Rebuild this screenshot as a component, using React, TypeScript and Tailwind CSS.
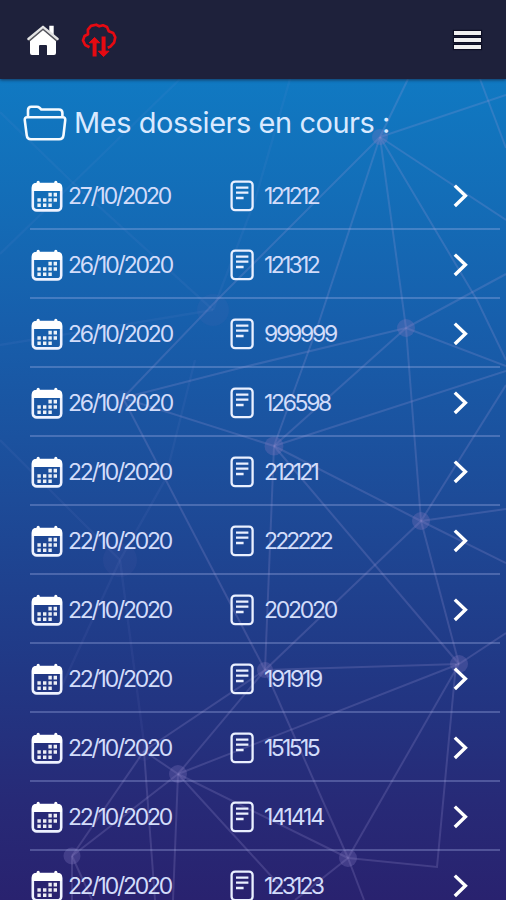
import { useLayoutEffect, useRef, useState } from "react";

const rows = [
  { date: "27/10/2020", dateWidth: 102, id: "121212", idWidth: 54 },
  { date: "26/10/2020", dateWidth: 104, id: "121312", idWidth: 54 },
  { date: "26/10/2020", dateWidth: 104, id: "999999", idWidth: 72 },
  { date: "26/10/2020", dateWidth: 104, id: "126598", idWidth: 66 },
  { date: "22/10/2020", dateWidth: 103, id: "212121", idWidth: 53 },
  { date: "22/10/2020", dateWidth: 103, id: "222222", idWidth: 67 },
  { date: "22/10/2020", dateWidth: 103, id: "202020", idWidth: 72 },
  { date: "22/10/2020", dateWidth: 103, id: "191919", idWidth: 57 },
  { date: "22/10/2020", dateWidth: 103, id: "151515", idWidth: 54 },
  { date: "22/10/2020", dateWidth: 103, id: "141414", idWidth: 59 },
  { date: "22/10/2020", dateWidth: 103, id: "123123", idWidth: 58 },
];

/* Text whose tracking is computed so that it spans the given width. */
function Tracked({ text, width }: { text: string; width: number }) {
  const ref = useRef<HTMLSpanElement>(null);
  const [spacing, setSpacing] = useState(0);
  useLayoutEffect(() => {
    if (ref.current) {
      const natural = ref.current.getBoundingClientRect().width;
      setSpacing((width - natural) / text.length);
    }
  }, [text, width]);
  return (
    <span ref={ref} className="inline-block whitespace-nowrap" style={{ letterSpacing: spacing }}>
      {text}
    </span>
  );
}

const lines = [
  "380,137 408,79", "380,137 506,95", "380,137 506,220", "380,137 477,300 506,360", "380,137 406,328",
  "380,137 318,325 274,446", "380,137 220,297 123,398", "480,79 506,148", "406,328 506,274", "406,328 240,368 123,398",
  "406,328 274,446", "406,328 421,521", "406,328 506,366", "274,446 506,371", "274,446 123,398",
  "274,446 421,521", "274,446 265,670", "274,446 459,664", "421,521 506,385", "421,521 506,509",
  "421,521 506,563", "421,521 459,664", "421,521 265,670", "123,398 265,670", "459,664 506,633",
  "459,664 265,670", "459,664 178,774", "459,664 348,858", "456,664 437,867 348,858", "265,670 348,858",
  "265,670 178,774", "265,670 144,751", "144,751 178,774", "144,751 72,856", "144,751 155,900",
  "178,774 72,856", "178,774 173,900", "178,774 348,858", "178,774 282,888", "72,856 72,900",
  "72,856 92,900", "348,858 295,900", "348,858 364,900",
];
const faint = [
  "0,112 72,182 213,310", "180,79 72,184 0,254", "290,79 255,200 213,310", "213,310 0,345",
  "195,360 165,480 120,560", "120,560 60,690", "120,560 145,751", "120,560 0,440",
];
const nodes = [
  [380, 137, 8], [406, 328, 9], [274, 446, 9.5], [421, 521, 9], [459, 664, 9],
  [265, 670, 8], [178, 774, 9], [72, 856, 8.5], [348, 858, 9],
];

function Network() {
  return (
    <svg className="absolute inset-0 h-[900px] w-[506px]" viewBox="0 0 506 900" fill="none" aria-hidden="true">
      <g stroke="#a79cda" strokeOpacity=".21" strokeWidth="2">
        {lines.map((p) => <polyline key={p} points={p} />)}
      </g>
      <g stroke="#9fa0dc" strokeOpacity=".07" strokeWidth="2.4">
        {faint.map((p) => <polyline key={p} points={p} />)}
      </g>
      <g fill="#8078c0" fillOpacity=".3">
        {nodes.map(([x, y, r]) => <circle key={`${x}-${y}`} cx={x} cy={y} r={r} />)}
      </g>
      <g fill="#8070c0" fillOpacity=".08">
        <circle cx="213" cy="310" r="16" />
        <circle cx="120" cy="560" r="17" />
        <circle cx="123" cy="400" r="10" />
        <circle cx="144" cy="751" r="10" />
      </g>
    </svg>
  );
}

function HomeIcon() {
  return (
    <svg className="h-8 w-[34px]" viewBox="0 0 34 32" fill="#fff">
      <path d="M23.3 1.8h4.4v10l-4.4-3.6z" />
      <path d="M4 16.5 17 5.5l13 11v12.4q0 2-2 2h-7v-9q0-1-1-1h-6q-1 0-1 1v9H6q-2 0-2-2z" />
      <path d="M3.2 16.8 17 5.2l13.8 11.6" fill="none" stroke="#55555c" strokeWidth="1.6" />
      <path d="M2.4 15 17 2.8 31.6 15" fill="none" stroke="#e4e4e4" strokeWidth="2.4" strokeLinecap="round" strokeLinejoin="round" />
    </svg>
  );
}

function SyncIcon() {
  return (
    <svg className="h-9 w-9" viewBox="0 0 36 36" fill="none" stroke="#e50a12" strokeWidth="2.7" strokeLinejoin="round">
      <path d="M8.5 25.2 4.2 23 2 18.4 3.6 14l3.4-1.8-.1-4.6L10 3.9l5.2-1.2 3.1 1.6 3.7-1L26 5l1.8 4.2 4.4 1.8 2.1 4.3-1.2 5.2-4 4.3-2.4.9" />
      <path d="M13.6 34.5V20M22.6 14.5v16" strokeWidth="4" />
      <path d="m8.2 20.8 5.4-5.4 5.2 5.4zM17.4 29.2l5.2 5.4L28 29.2z" fill="#e50a12" strokeWidth="1" />
    </svg>
  );
}

function FolderIcon() {
  return (
    <svg className="h-9 w-11 shrink-0" viewBox="0 0 44 36" fill="none" stroke="#f5faff" strokeWidth="2.6" strokeLinejoin="round">
      <path d="M5 12.3V5.2q0-3.5 3.3-3.5h5.5q1.5 0 2.7 1.1l1.8 1.7h17.6q3.5 0 3.5 3.5v4.3" />
      <path d="M4.2 12.3h35.6q2.8 0 2.4 3l-1.7 14.8q-.5 4.2-4.3 4.2H8q-3.8 0-4.3-4.2L1.8 15.3q-.4-3 2.4-3z" />
    </svg>
  );
}

function CalendarIcon() {
  return (
    <svg className="h-8 w-8 shrink-0" viewBox="0 0 32 32" fill="#fff">
      <rect x="1.8" y="4" width="28.4" height="26.4" rx="4" fill="none" stroke="#eef2ff" strokeWidth="2.6" />
      <path d="M1 11V7q0-4 4-4h22q4 0 4 4v4z" />
      <path d="M5.6 4V2.4a1.6 1.6 0 0 1 3.2 0V4zM23.2 4V2.4a1.6 1.6 0 0 1 3.2 0V4z" />
      <path d="M17.4 12.8h3.4v3.6h-3.4zM22.6 12.8H26v3.6h-3.4zM6.4 18.3h3.4v3.4H6.4zM12 18.3h3.4v3.4H12zM17.4 18.3h3.4v3.4h-3.4zM22.6 18.3H26v3.4h-3.4zM6.4 23.5h3.4v3.6H6.4zM12 23.5h3.4v3.6H12zM17.4 23.5h3.4v3.6h-3.4z" opacity=".92" />
    </svg>
  );
}

function DocumentIcon() {
  return (
    <svg className="h-8 w-6 shrink-0" viewBox="0 0 24 32" fill="none" stroke="#eaf0ff" strokeWidth="2.3">
      <rect x="1.6" y="1.6" width="21" height="28.6" rx="3.5" />
      <path d="M6 7.6h12.4M6 12.6h12.4M6 18h7.6" strokeWidth="2.4" />
    </svg>
  );
}

function Chevron() {
  return (
    <svg className="h-6 w-4" viewBox="0 0 16 24" fill="none" stroke="#fff" strokeWidth="3.4">
      <path d="M1.8 1.6 12.4 11.8 1.8 22" />
    </svg>
  );
}

export default function App() {
  return (
    <div className="relative flex h-[900px] w-[506px] flex-col overflow-hidden bg-linear-[180deg,#1079c2_79px,#136eb8_190px,#175fac_320px,#1d4b98_500px,#213885_670px,#272a77_800px,#29226f_900px] font-['Inter','Liberation_Sans',sans-serif]">
      <Network />
      <header className="relative flex h-[79px] shrink-0 items-center bg-[#1e213b] pr-[25px] pl-[26px] shadow-[0_1px_3px_rgba(20,40,70,0.8)]">
        <HomeIcon />
        <span className="ml-[21px]"><SyncIcon /></span>
        <div className="mt-px ml-auto flex w-[27px] flex-col gap-[3px]">
          <span className="h-1 bg-[#f0f0f0] shadow-[0_0_1px_1px_#0c0d22]" />
          <span className="h-1 bg-[#f0f0f0] shadow-[0_0_1px_1px_#0c0d22]" />
          <span className="h-1 bg-[#f0f0f0] shadow-[0_0_1px_1px_#0c0d22]" />
        </div>
      </header>
      <main className="relative">
        <h1 className="flex h-[82px] items-center gap-[7px] pt-[6px] pl-[23px] text-[29px] text-[#d9e9ff]">
          <FolderIcon />
          <Tracked text="Mes dossiers en cours :" width={316} />
        </h1>
        <ul className="pr-[6px] pl-[30px]">
          {rows.map((r, i) => (
            <li key={i} className="flex h-[69px] items-center border-b-2 border-[#a9b4ea]/32 pt-[2px] pl-px text-[23px] text-[#d2dcfa]">
              <div className="flex w-[199px] items-center gap-[5px]">
                <CalendarIcon />
                <div className="pt-px"><Tracked text={r.date} width={r.dateWidth} /></div>
              </div>
              <div className="flex items-center gap-[10px]">
                <DocumentIcon />
                <div className="pt-px"><Tracked text={r.id} width={r.idWidth} /></div>
              </div>
              <span className="mr-[31px] ml-auto"><Chevron /></span>
            </li>
          ))}
        </ul>
      </main>
    </div>
  );
}
